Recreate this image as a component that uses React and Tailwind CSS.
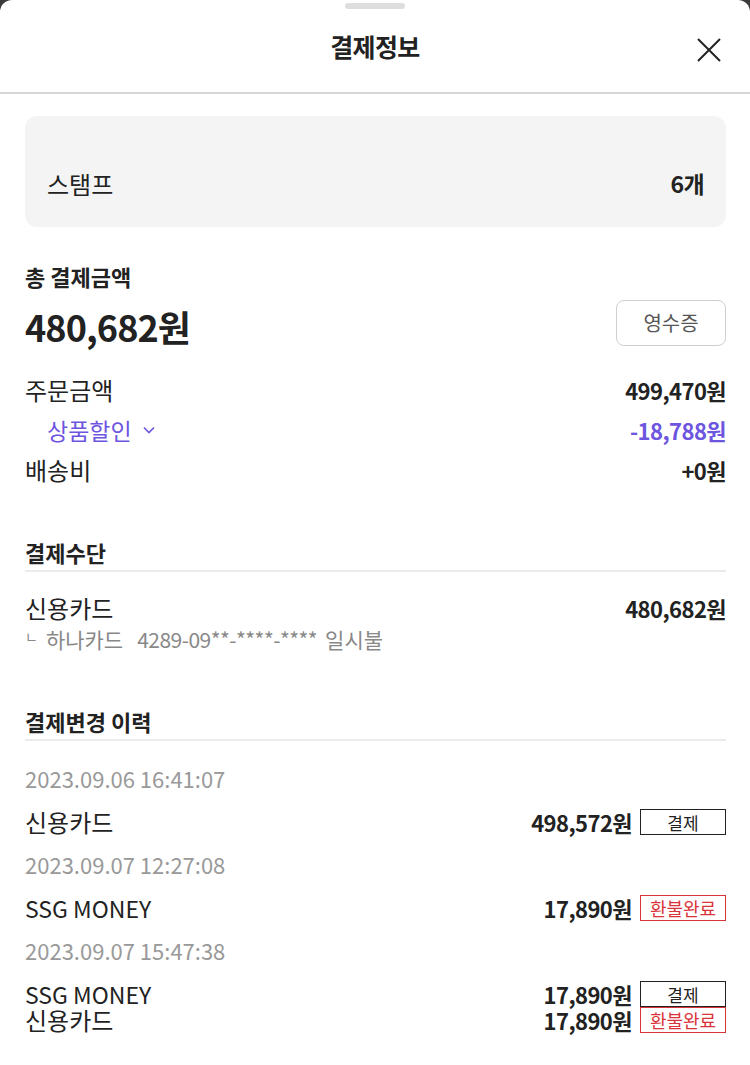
const history = [
    {
        date: "2023.09.06 16:41:07",
        items: [{ method: "신용카드", amount: "498,572원", status: "결제" }],
    },
    {
        date: "2023.09.07 12:27:08",
        items: [{ method: "SSG MONEY", amount: "17,890원", status: "환불완료" }],
    },
    {
        date: "2023.09.07 15:47:38",
        items: [
            { method: "SSG MONEY", amount: "17,890원", status: "결제" },
            { method: "신용카드", amount: "17,890원", status: "환불완료" },
        ],
    },
];

function StatusBox({ status }) {
    const refund = status === "환불완료";
    return (
        <div
            className={
                refund
                    ? "w-[86px] h-[26px] border border-[#d9343a] text-[#d9343a] text-[18px] leading-none flex items-center justify-center"
                    : "w-[86px] h-[26px] border border-[#222] text-[#222] text-[17px] leading-none flex items-center justify-center"
            }
        >
            {status}
        </div>
    );
}

export default function App() {
    return (
        <div className="bg-[#3a3a3a] min-h-[1065px] font-['Noto_Sans_CJK_KR',sans-serif] text-[#222]">
            <div className="bg-white rounded-t-[12px] min-h-[1065px] w-[750px]">
                {/* header */}
                <div className="border-b-2 border-[#d6d6d6]">
                    <div className="pt-[3px] flex justify-center">
                        <div className="w-[60px] h-[6px] rounded-full bg-[#dedede]" />
                    </div>
                    <div className="h-[83px] flex items-center justify-between px-[28px]">
                        <div className="w-[26px]" />
                        <span className="text-[25px] font-semibold tracking-tight -mt-[8px]">결제정보</span>
                        <svg width="26" height="26" viewBox="0 0 26 26" className="-mt-[2px]">
                            <path d="M2 2 L24 24 M24 2 L2 24" stroke="#222" strokeWidth="2" fill="none" />
                        </svg>
                    </div>
                </div>

                <div className="pl-[25px] pr-[24px]">
                    {/* stamp */}
                    <div className="mt-[22px] h-[111px] rounded-[12px] bg-[#f4f4f4] px-[22px] pt-[24px] flex items-center justify-between">
                        <span className="text-[24px]">스탬프</span>
                        <span className="text-[23px] font-bold tracking-tight">6개</span>
                    </div>

                    {/* total */}
                    <div className="mt-[35px] h-[28px] flex items-center text-[22px] font-bold">총 결제금액</div>
                    <div className="mt-[10px] h-[46px] flex items-center justify-between">
                        <span className="text-[36px] font-bold tracking-tight mt-[6px]">480,682원</span>
                        <button className="w-[110px] h-[46px] rounded-[8px] border border-[#cfcfcf] text-[20px] text-[#555]">
                            영수증
                        </button>
                    </div>

                    <div className="mt-[24px]">
                        <div className="h-[40px] flex items-center justify-between">
                            <span className="text-[24px]">주문금액</span>
                            <span className="text-[22px] font-bold tracking-tight">499,470원</span>
                        </div>
                        <div className="h-[40px] flex items-center justify-between text-[#6d55e0]">
                            <span className="pl-[22px] text-[23px] flex items-center gap-[11px]">
                                상품할인
                                <svg width="12" height="8" viewBox="0 0 12 8">
                                    <path d="M1 1.5 L6 6.5 L11 1.5" stroke="#6d55e0" strokeWidth="1.6" fill="none" />
                                </svg>
                            </span>
                            <span className="text-[22px] font-bold tracking-tight">-18,788원</span>
                        </div>
                        <div className="h-[40px] flex items-center justify-between">
                            <span className="text-[24px]">배송비</span>
                            <span className="text-[22px] font-bold tracking-tight">+0원</span>
                        </div>
                    </div>

                    {/* payment method */}
                    <div className="mt-[48px] pb-[4px] border-b-2 border-[#ebebeb]">
                        <div className="h-[28px] flex items-center text-[22px] font-bold">결제수단</div>
                    </div>
                    <div className="mt-[21px] h-[30px] flex items-center justify-between">
                        <span className="text-[24px]">신용카드</span>
                        <span className="text-[22px] font-bold tracking-tight">480,682원</span>
                    </div>
                    <div className="mt-[2px] h-[30px] flex items-center text-[21px] text-[#888]">
                        <span className="text-[14px] mr-[8px] -mt-[8px]">ㄴ</span>
                        <span>하나카드</span>
                        <span className="ml-[14px] tracking-tight">4289-09**-****-****</span>
                        <span className="ml-[8px]">일시불</span>
                    </div>

                    {/* history */}
                    <div className="mt-[52px] pb-[4px] border-b-2 border-[#ebebeb]">
                        <div className="h-[28px] flex items-center text-[22px] font-bold">결제변경 이력</div>
                    </div>
                    <div className="mt-[22px]">
                        {history.map((group) => (
                            <div key={group.date} className="mb-[14px]">
                                <div className="h-[30px] flex items-center text-[22px] text-[#999]">
                                    {group.date}
                                </div>
                                <div className="mt-[16px]">
                                    {group.items.map((item, i) => (
                                        <div key={i} className="h-[26px] flex items-center justify-between leading-none">
                                            <span className={item.method === "SSG MONEY" ? "text-[23px]" : "text-[24px]"}>
                                                {item.method}
                                            </span>
                                            <div className="flex items-center gap-[8px]">
                                                <span className="text-[22px] font-bold tracking-tight">{item.amount}</span>
                                                <StatusBox status={item.status} />
                                            </div>
                                        </div>
                                    ))}
                                </div>
                            </div>
                        ))}
                    </div>
                </div>
            </div>
        </div>
    );
}
